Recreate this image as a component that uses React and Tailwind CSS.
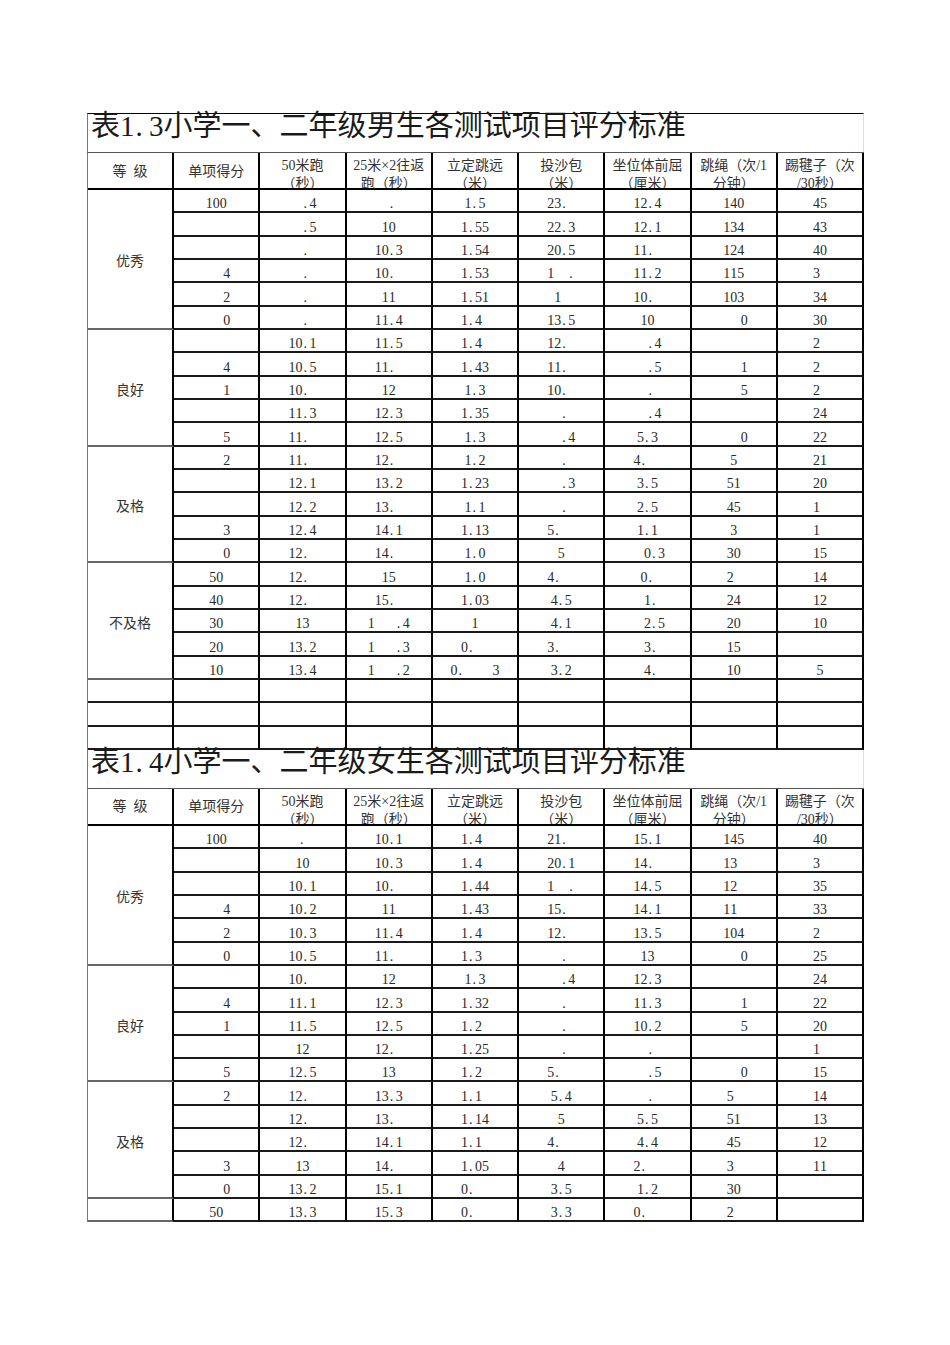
import React from "react";

const HEADERS = [
  ["等\u2002级"],
  ["单项得分"],
  ["50米跑", "（秒）"],
  ["25米×2往返", "跑（秒）"],
  ["立定跳远", "（米）"],
  ["投沙包", "（米）"],
  ["坐位体前屈", "（厘米）"],
  ["跳绳（次/1", "分钟）"],
  ["踢毽子（次", "/30秒）"],
];

// "_" marks a digit that is missing in the source and only keeps its width
const BOYS = [
  {
    label: "优秀",
    rows: [
      ["100", "__.4", "__._", "1.5", "23._", "12.4", "140", "45"],
      ["", "__.5", "10", "1.55", "22.3", "12.1", "134", "43"],
      ["", "__._", "10.3", "1.54", "20.5", "11._", "124", "40"],
      ["___4", "__._", "10._", "1.53", "1__.", "11.2", "115", "3_"],
      ["___2", "__._", "11", "1.51", "1_", "10._", "103", "34"],
      ["___0", "__._", "11.4", "1.4_", "13.5", "10", "___0", "30"],
    ],
  },
  {
    label: "良好",
    rows: [
      ["", "10.1", "11.5", "1.4_", "12._", "__.4", "", "2_"],
      ["___4", "10.5", "11._", "1.43", "11._", "__.5", "___1", "2_"],
      ["___1", "10._", "12", "1.3", "10._", "__._", "___5", "2_"],
      ["", "11.3", "12.3", "1.35", "__._", "__.4", "", "24"],
      ["___5", "11._", "12.5", "1.3", "__.4", "5.3", "___0", "22"],
    ],
  },
  {
    label: "及格",
    rows: [
      ["___2", "11._", "12._", "1.2", "__._", "4.__", "5", "21"],
      ["", "12.1", "13.2", "1.23", "__.3", "3.5", "51", "20"],
      ["", "12.2", "13._", "1.1", "__._", "2.5", "45", "1_"],
      ["___3", "12.4", "14.1", "1.13", "5.__", "1.1", "3", "1_"],
      ["___0", "12._", "14._", "1.0", "5", "__0.3", "30", "15"],
    ],
  },
  {
    label: "不及格",
    rows: [
      ["50", "12._", "15", "1.0", "4.__", "0.", "2_", "14"],
      ["40", "12._", "15._", "1.03", "4.5", "_1.", "24", "12"],
      ["30", "13", "1___.4", "1", "4.1", "__2.5", "20", "10"],
      ["20", "13.2", "1___.3", "0.__", "3.__", "_3.", "15", ""],
      ["10", "13.4", "1___.2", "0.____3", "3.2", "_4.", "10", "5"],
    ],
  },
];

const GIRLS = [
  {
    label: "优秀",
    rows: [
      ["100", "_._", "10.1", "1.4_", "21._", "15.1", "145", "40"],
      ["", "10", "10.3", "1.4_", "20.1", "14._", "13_", "3_"],
      ["", "10.1", "10._", "1.44", "1__.", "14.5", "12_", "35"],
      ["___4", "10.2", "11", "1.43", "15._", "14.1", "11_", "33"],
      ["___2", "10.3", "11.4", "1.4_", "12._", "13.5", "104", "2_"],
      ["___0", "10.5", "11._", "1.3_", "__._", "13", "___0", "25"],
    ],
  },
  {
    label: "良好",
    rows: [
      ["", "10._", "12", "1.3", "__.4", "12.3", "", "24"],
      ["___4", "11.1", "12.3", "1.32", "__._", "11.3", "___1", "22"],
      ["___1", "11.5", "12.5", "1.2_", "__._", "10.2", "___5", "20"],
      ["", "12", "12._", "1.25", "__._", "__._", "", "1_"],
      ["___5", "12.5", "13", "1.2_", "5.__", "__.5", "___0", "15"],
    ],
  },
  {
    label: "及格",
    rows: [
      ["___2", "12._", "13.3", "1.1_", "5.4", "__._", "5_", "14"],
      ["", "12._", "13._", "1.14", "5", "5.5", "51", "13"],
      ["", "12._", "14.1", "1.1_", "4.__", "4.4", "45", "12"],
      ["___3", "13", "14._", "1.05", "4", "2.__", "3_", "11"],
      ["___0", "13.2", "15.1", "0.__", "3.5", "1.2", "30", ""],
    ],
  },
  {
    label: "",
    rows: [["50", "13.3", "15.3", "0.__", "3.3", "0.__", "2_", ""]],
  },
];

const SPAN = { 1: "row-span-1", 5: "row-span-5", 6: "row-span-6" };

// half-width cells like the source font: the period takes a full digit slot
const Val = ({ v }) =>
  v.split("").map((ch, i) =>
    ch === "_" ? (
      <span key={i} className="invisible">
        0
      </span>
    ) : ch === "." ? (
      <span key={i} className="inline-block w-[0.5em] pl-[1px] text-left">
        .
      </span>
    ) : (
      <span key={i}>{ch}</span>
    )
  );

const ScoreTable = ({ title, groups, emptyRows = 0, first = false }) => (
  <div className="w-[777px]">
    <div
      className={`flex border-l border-r border-l-[#777] border-r-[#ddd] ${
        first ? "h-[39px] border-t border-t-black" : "h-[38px]"
      }`}
    >
      <p className="-mt-[2px] pl-[3px] text-[29px] leading-[29px] text-[#1a1a1a] whitespace-nowrap">
        <Val v={title} />
      </p>
    </div>

    {/* header */}
    <div className="grid grid-cols-9 h-[38px] border-t border-[#555] border-l border-l-[#777]">
      {HEADERS.map((h, i) => (
        <div
          key={i}
          className={`border-r-2 border-b-2 border-black overflow-hidden flex flex-col items-center text-[14px] leading-[18px] text-[#333] whitespace-nowrap ${
            h.length === 1 ? "justify-center pt-[2px]" : "pt-[4px]"
          }`}
        >
          {h.map((line) => (
            <span key={line}>{line}</span>
          ))}
        </div>
      ))}
    </div>

    {/* data */}
    <div className="grid grid-cols-9 auto-rows-[23.33px] border-l border-[#777] text-[14px] text-[#2a2a2a]">
      {groups.map((g, gi) => (
        <React.Fragment key={gi}>
          <div
            className={`${SPAN[g.rows.length]} border-r-2 border-b-2 border-r-black border-b-[#666] flex items-center justify-center pt-[6px] text-[#333]`}
          >
            {g.label}
          </div>
          {g.rows.map((row, ri) =>
            row.map((v, ci) => (
              <div
                key={`${ri}-${ci}`}
                className="border-r-2 border-b-2 border-r-black border-b-[#1a1a1a] flex items-end justify-center leading-[14px] whitespace-pre"
              >
                <Val v={v} />
              </div>
            ))
          )}
        </React.Fragment>
      ))}
      {Array.from({ length: emptyRows * 9 }).map((_, i) => (
        <div
          key={`e${i}`}
          className="border-r-2 border-b-2 border-r-black border-b-[#1a1a1a]"
        />
      ))}
    </div>
  </div>
);

export default function App() {
  return (
    <div className="bg-white min-h-[1345px] pt-[113px] pl-[87px] font-['Liberation_Serif','Noto_Sans_CJK_SC',serif]">
      <ScoreTable
        first
        title="表1.3小学一、二年级男生各测试项目评分标准"
        groups={BOYS}
        emptyRows={3}
      />
      <ScoreTable
        title="表1.4小学一、二年级女生各测试项目评分标准"
        groups={GIRLS}
      />
    </div>
  );
}
